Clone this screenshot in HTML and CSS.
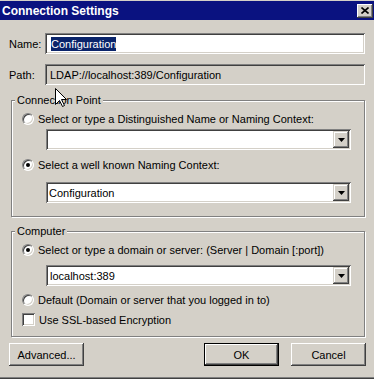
FILE: index.html
```html
<!DOCTYPE html>
<html lang="en">
<head>
  <meta charset="UTF-8">
  <title>Connection Settings</title>
  <link rel="stylesheet" href="styles.css">
</head>
<body>
  <div class="window">
    <div class="titlebar">
      <span class="title">Connection Settings</span>
      <span class="close-btn">
        <svg width="8" height="7" viewBox="0 0 8 7"><path d="M0.5 0.5 L7.5 6.5 M7.5 0.5 L0.5 6.5" stroke="#000" stroke-width="1.6"/></svg>
      </span>
    </div>

    <div class="content">
      <div class="field-row name-row">
        <span class="field-label">Name:</span>
        <div class="textbox"><span class="selected">Configuration</span></div>
      </div>
      <div class="field-row path-row">
        <span class="field-label">Path:</span>
        <div class="textbox readonly">LDAP://localhost:389/Configuration</div>
      </div>

      <div class="group group-connection">
        <div class="group-title">Connection Point</div>
        <div class="option opt-1"><span class="radio"></span>Select or type a Distinguished Name or Naming Context:</div>
        <div class="combo combo-1">
          <span class="combo-text"></span>
          <span class="combo-btn"><svg width="7" height="4" viewBox="0 0 7 4"><path d="M0 0 H7 L3.5 4 Z" fill="#000"/></svg></span>
        </div>
        <div class="option opt-2"><span class="radio checked"></span>Select a well known Naming Context:</div>
        <div class="combo combo-2">
          <span class="combo-text">Configuration</span>
          <span class="combo-btn"><svg width="7" height="4" viewBox="0 0 7 4"><path d="M0 0 H7 L3.5 4 Z" fill="#000"/></svg></span>
        </div>
      </div>

      <div class="group group-computer">
        <div class="group-title">Computer</div>
        <div class="option opt-3"><span class="radio checked"></span>Select or type a domain or server: (Server | Domain [:port])</div>
        <div class="combo combo-3">
          <span class="combo-text">localhost:389</span>
          <span class="combo-btn"><svg width="7" height="4" viewBox="0 0 7 4"><path d="M0 0 H7 L3.5 4 Z" fill="#000"/></svg></span>
        </div>
        <div class="option opt-4"><span class="radio"></span>Default (Domain or server that you logged in to)</div>
        <div class="option opt-5"><span class="checkbox"></span>Use SSL-based Encryption</div>
      </div>

      <div class="button-row">
        <button class="btn">Advanced...</button>
        <button class="btn btn-default">OK</button>
        <button class="btn">Cancel</button>
      </div>
    </div>

    <svg class="cursor" width="13" height="20" viewBox="0 0 13 20">
      <path d="M0.5 0.5 V16.5 L4.5 12.5 L7.5 18.5 L9.5 17.5 L6.5 11.5 H11.5 Z" fill="#fff" stroke="#000" stroke-width="1"/>
    </svg>
  </div>
</body>
</html>
```

FILE: styles.css
```css
* {
  box-sizing: border-box;
}

body {
  margin: 0;
  background-color: #d4d0c8;
  font-family: 'Liberation Sans', Arial, sans-serif;
  font-size: 11px;
  color: #000;
}

.window {
  position: relative;
  width: 374px;
  height: 379px;
  padding-top: 1px;
  background-color: #d4d0c8;
  border-bottom: 1px solid #404040;
  box-shadow: inset 0 -1px #808080;
}

.titlebar {
  height: 19px;
  display: flex;
  align-items: center;
  justify-content: space-between;
  padding: 0 1px 0 2px;
  background-color: #0a1280;
  color: #fff;
  font-size: 12px;
  font-weight: bold;
}

.close-btn {
  width: 16px;
  height: 14px;
  display: flex;
  align-items: center;
  justify-content: center;
  background-color: #d4d0c8;
  box-shadow: inset -1px -1px #404040, inset 1px 1px #fff, inset -2px -2px #808080;
}

.content {
  padding: 0 8px 0 9px;
}

.field-row {
  display: flex;
  align-items: center;
}

.name-row {
  margin-top: 13px;
}

.path-row {
  margin-top: 10px;
}

.field-label {
  width: 36px;
}

.textbox {
  width: 320px;
  height: 21px;
  display: flex;
  align-items: center;
  padding-left: 6px;
  background-color: #fff;
  box-shadow: inset 1px 1px #808080, inset -1px -1px #fff, inset 2px 2px #404040, inset -2px -2px #d4d0c8;
}

.textbox.readonly {
  padding-left: 5px;
  background-color: #d4d0c8;
}

.selected {
  line-height: 14px;
  background-color: #0a246a;
  color: #fff;
}

.group {
  width: 354px;
  margin-left: 2px;
  border: 1px solid #808080;
  box-shadow: inset 1px 1px #fff, 1px 1px #fff;
}

.group-connection {
  margin-top: 15px;
  padding-bottom: 13px;
}

.group-computer {
  margin-top: 14px;
  padding-bottom: 10px;
}

.group-title {
  width: fit-content;
  margin: -7px 0 0 3px;
  padding: 0 2px;
  line-height: 13px;
  background-color: #d4d0c8;
}

.option {
  height: 13px;
  display: flex;
  align-items: center;
  gap: 4px;
  margin-left: 10px;
}

.opt-1 { margin-top: 5px; }
.opt-2 { margin-top: 8px; }
.opt-3 { margin-top: 5px; }
.opt-4 { margin-top: 7px; }
.opt-5 { margin-top: 7px; }

.radio {
  position: relative;
  width: 12px;
  height: 12px;
  flex: none;
  border-radius: 50%;
  background-color: #fff;
  border: 1px solid;
  border-color: #808080 #fff #fff #808080;
  box-shadow: inset 1px 1px #404040, inset -1px -1px #d4d0c8;
}

.radio.checked::after {
  content: '';
  position: absolute;
  left: 3px;
  top: 3px;
  width: 4px;
  height: 4px;
  border-radius: 50%;
  background-color: #000;
}

.checkbox {
  width: 13px;
  height: 13px;
  flex: none;
  background-color: #fff;
  box-shadow: inset 1px 1px #808080, inset -1px -1px #fff, inset 2px 2px #404040, inset -2px -2px #d4d0c8;
}

.combo {
  width: 305px;
  height: 21px;
  display: flex;
  justify-content: space-between;
  align-items: center;
  margin-left: 34px;
  padding: 2px;
  background-color: #fff;
  box-shadow: inset 1px 1px #808080, inset -1px -1px #fff, inset 2px 2px #404040, inset -2px -2px #d4d0c8;
}

.combo-1 { margin-top: 4px; }
.combo-2 { margin-top: 11px; }
.combo-3 { margin-top: 9px; }

.combo-text {
  padding-left: 1px;
}

.combo-3 .combo-text {
  padding-left: 2px;
}

.combo-btn {
  width: 16px;
  height: 17px;
  display: flex;
  align-items: center;
  justify-content: center;
  background-color: #d4d0c8;
  box-shadow: inset -1px -1px #404040, inset 1px 1px #d4d0c8, inset -2px -2px #808080, inset 2px 2px #fff;
}

.button-row {
  display: flex;
  margin-top: 6px;
}

.btn {
  width: 75px;
  height: 23px;
  padding: 0;
  border: none;
  font: inherit;
  color: #000;
  background-color: #d4d0c8;
  box-shadow: inset -1px -1px #404040, inset 1px 1px #fff, inset -2px -2px #808080;
}

.btn-default {
  margin-left: auto;
  margin-right: 12px;
  border: 1px solid #000;
}

.cursor {
  position: absolute;
  left: 55px;
  top: 88px;
}
```
